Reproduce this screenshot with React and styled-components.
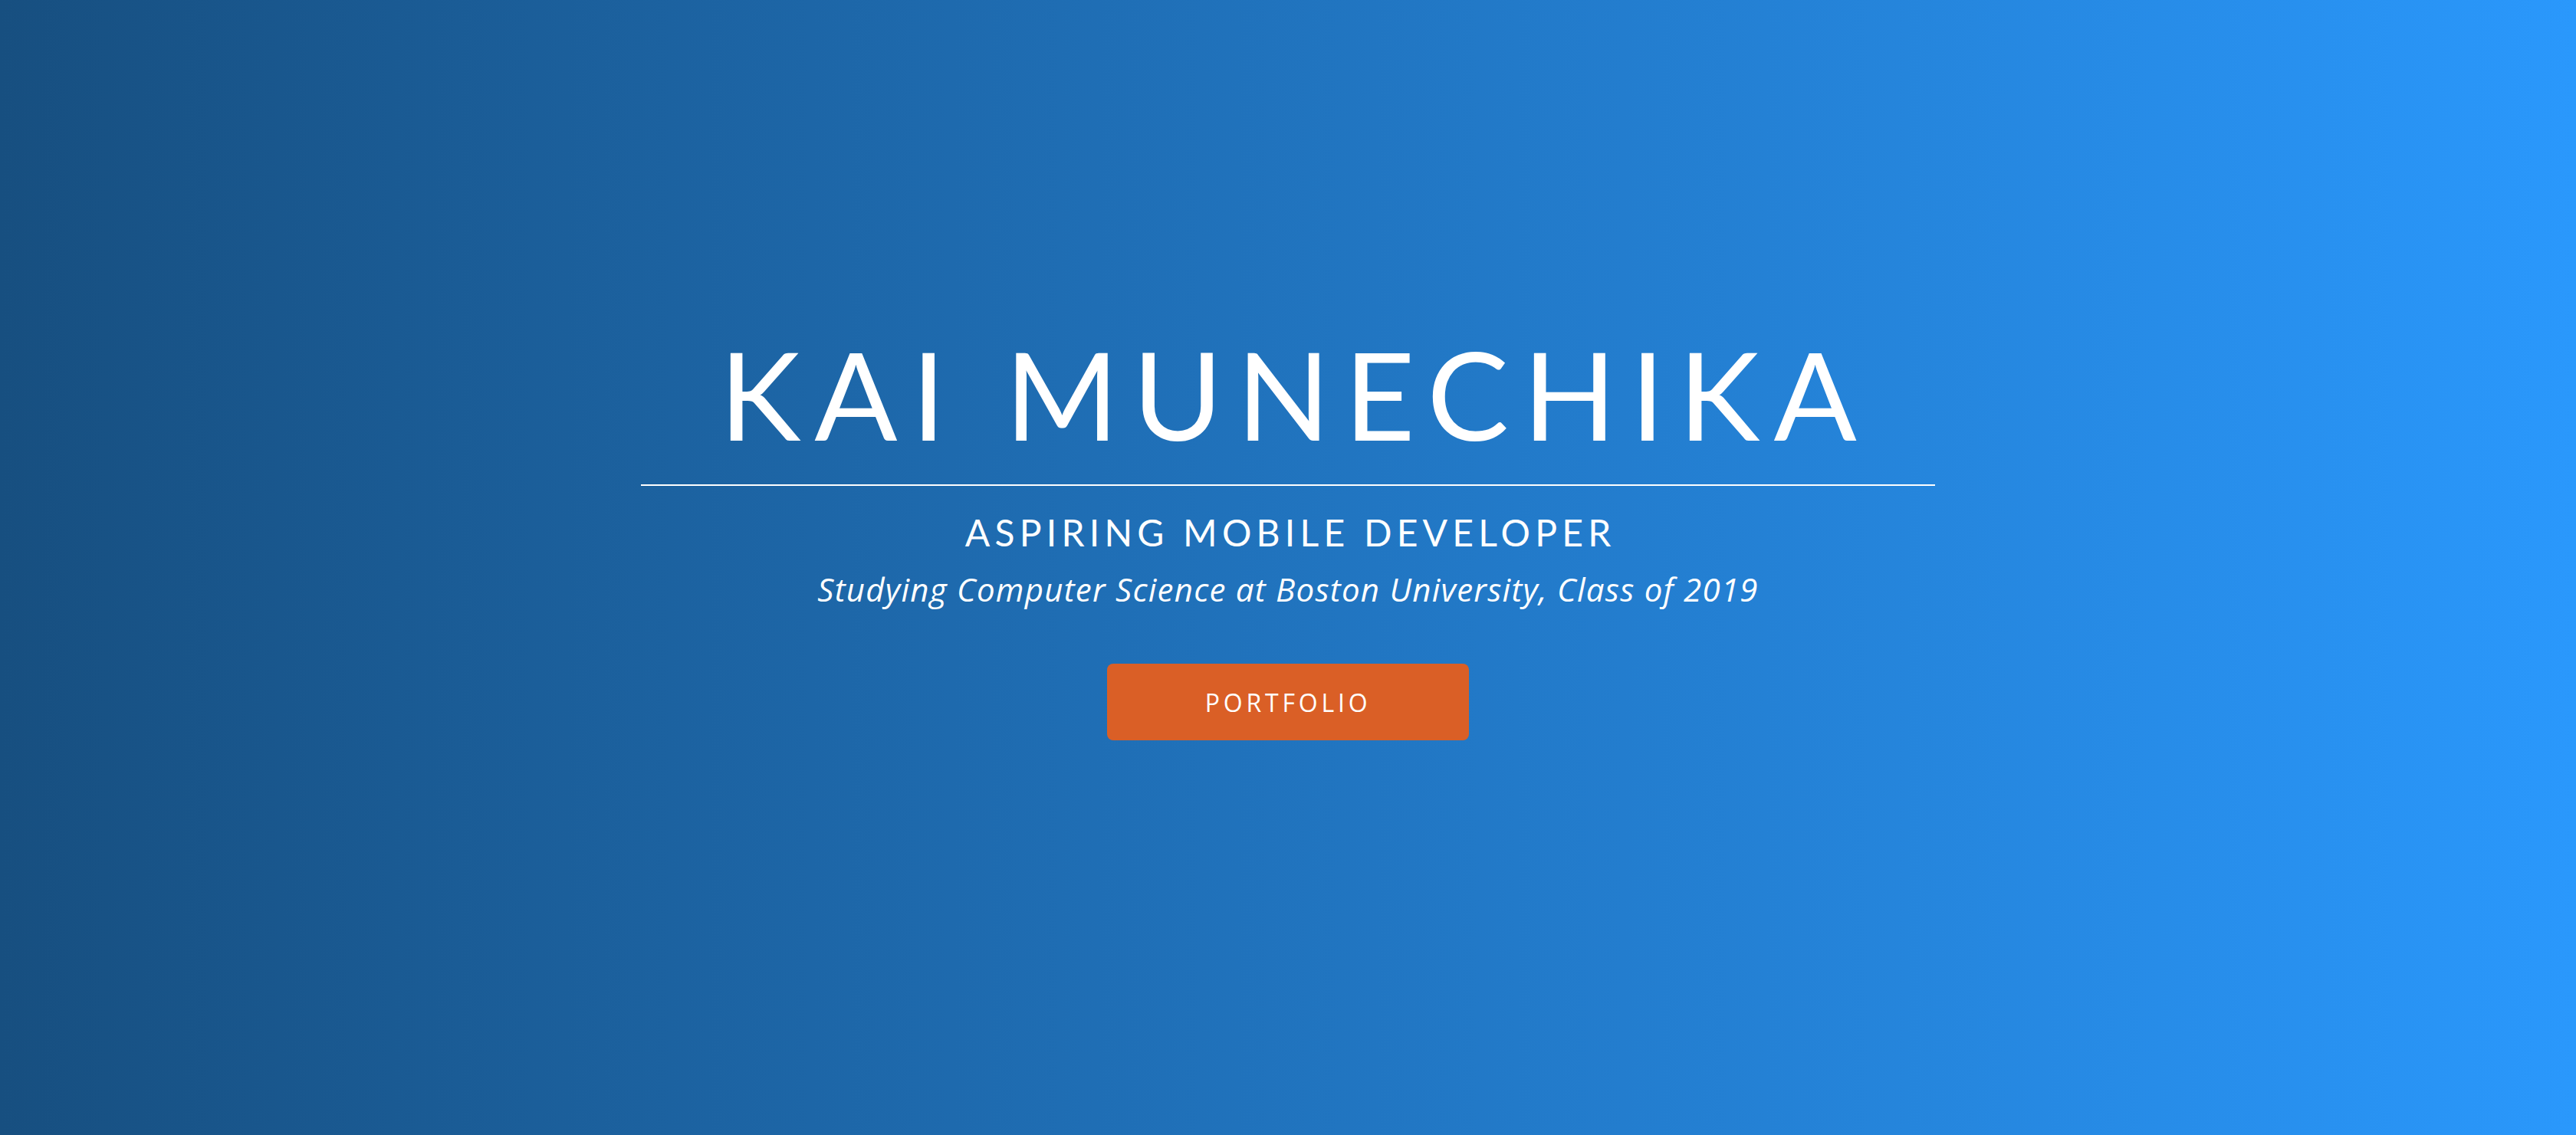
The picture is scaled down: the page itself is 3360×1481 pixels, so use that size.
import React from 'react'
import styled, { createGlobalStyle } from 'styled-components'

const GlobalStyle = createGlobalStyle`
  html, body {
    margin: 0;
    padding: 0;
  }
  body {
    font-family: Lato, "Open Sans", sans-serif;
  }
`

export const Hero = styled.header`
  display: flex;
  flex-direction: column;
  align-items: center;
  box-sizing: border-box;
  height: 1481px;
  padding-top: 433px;
  background: linear-gradient(to right, #174f80 0%, #2a98fc 100%);
  color: #fff;
`

export const Name = styled.h1`
  margin: 0;
  font-family: Lato, sans-serif;
  font-weight: 400;
  font-size: 160px;
  line-height: 160px;
  letter-spacing: 0.113em;
  margin-right: -0.113em;
`

export const Divider = styled.hr`
  width: 1688px;
  height: 2px;
  margin: 39px 0 0;
  border: 0;
  background: #fff;
`

export const Role = styled.h2`
  margin: 37px 0 0;
  font-family: Lato, sans-serif;
  font-weight: 400;
  font-size: 48px;
  line-height: 48px;
  letter-spacing: 0.13em;
  margin-right: -0.13em;
`

export const Tagline = styled.p`
  margin: 29px 0 0;
  font-family: "Open Sans", sans-serif;
  font-style: italic;
  font-weight: 500;
  font-size: 42px;
  line-height: 42px;
  letter-spacing: 0.03em;
`

export const Button = styled.a`
  display: flex;
  align-items: center;
  justify-content: center;
  width: 472px;
  height: 100px;
  margin-top: 76px;
  border-radius: 8px;
  background: #da5f26;
  color: #fff;
  font-family: "Open Sans", sans-serif;
  font-weight: 500;
  font-size: 32px;
  letter-spacing: 0.15em;
  text-decoration: none;
`

const App = () => (
  <>
    <GlobalStyle />
    <Hero>
      <Name>KAI MUNECHIKA</Name>
      <Divider />
      <Role>ASPIRING MOBILE DEVELOPER</Role>
      <Tagline>Studying Computer Science at Boston University, Class of 2019</Tagline>
      <Button href="#portfolio">PORTFOLIO</Button>
    </Hero>
  </>
)

export default App
